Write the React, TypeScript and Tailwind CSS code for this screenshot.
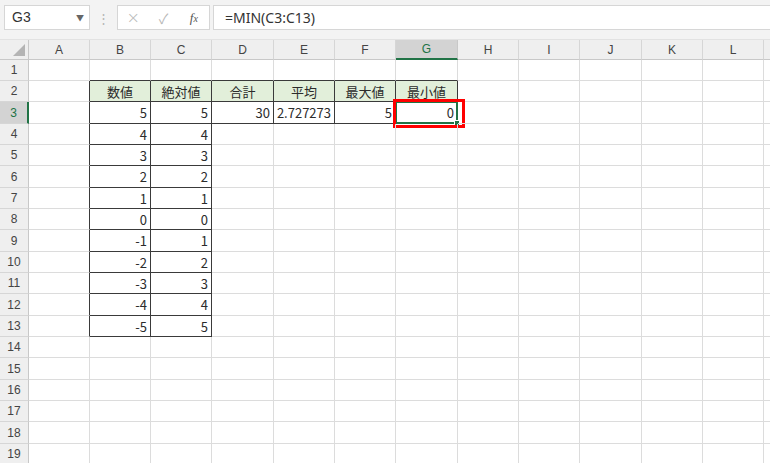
import React from 'react'

const COLS = ['A', 'B', 'C', 'D', 'E', 'F', 'G', 'H', 'I', 'J', 'K', 'L', '']
const COL_W = ['w-[61px]', 'w-[61px]', 'w-[61px]', 'w-[62px]', 'w-[61px]', 'w-[61px]', 'w-[62px]', 'w-[61px]', 'w-[61px]', 'w-[62px]', 'w-[61px]', 'w-[61px]', 'w-[61px]']
const ROW_H = ['h-[21px]', 'h-[21px]', 'h-[22px]']

const nums = [5, 4, 3, 2, 1, 0, -1, -2, -3, -4, -5]

// cell contents: key "row,col" (row 1-based, col 0 = A)
const cells: Record<string, { text: string; head?: boolean }> = {
  '2,1': { text: '数値', head: true },
  '2,2': { text: '絶対値', head: true },
  '2,3': { text: '合計', head: true },
  '2,4': { text: '平均', head: true },
  '2,5': { text: '最大値', head: true },
  '2,6': { text: '最小値', head: true },
  '3,3': { text: '30' },
  '3,4': { text: '2.727273' },
  '3,5': { text: '5' },
  '3,6': { text: '0' },
}
nums.forEach((n, i) => {
  cells[`${i + 3},1`] = { text: String(n) }
  cells[`${i + 3},2`] = { text: String(Math.abs(n)) }
})

function inTable(r: number, c: number) {
  if (c >= 1 && c <= 2 && r >= 2 && r <= 13) return true
  if (c >= 3 && c <= 6 && r >= 2 && r <= 3) return true
  return false
}

function Cell({ r, c }: { r: number; c: number }) {
  const right = inTable(r, c) || inTable(r, c + 1)
  const bottom = inTable(r, c) || inTable(r + 1, c)
  const data = cells[`${r},${c}`]
  const selected = r === 3 && c === 6
  return (
    <div
      className={`relative shrink-0 h-full border-r border-b flex items-center ${COL_W[c]} ${
        right ? 'border-r-[#3a3a3a]' : 'border-r-[#dcdcdc]'
      } ${bottom ? 'border-b-[#3a3a3a]' : 'border-b-[#dcdcdc]'} ${
        data?.head ? 'bg-[#e2efda] justify-center' : 'justify-end pr-[3px]'
      }`}
    >
      {data && <span className="text-[13px] leading-none text-[#2b2b2b]">{data.text}</span>}
      {selected && (
        <>
          <div className="absolute left-[-1px] top-[-1px] right-[-1px] bottom-[-1px] border-2 border-[#217346]" />
          <div className="absolute right-[-3px] bottom-[-3px] w-[6px] h-[6px] bg-[#217346] border border-white" />
          <div className="absolute left-[-3px] top-[-3px] w-[72px] h-[29px] border-[3px] border-[#ff0000]" />
        </>
      )}
    </div>
  )
}

export default function App() {
  const rows = Array.from({ length: 20 }, (_, i) => i + 1)
  return (
    <div className="w-[770px] h-[463px] overflow-hidden bg-white font-['Noto_Sans_CJK_JP','Noto_Sans',sans-serif] text-[#333]">
      {/* formula bar */}
      <div className="h-[39px] bg-[#f3f3f3] flex items-start pt-[5px] pl-[4px]">
        <div className="w-[86px] h-[25px] bg-white border border-[#d6d6d6] flex items-center justify-between pl-[7px] pr-[5px]">
          <span className="text-[14px] text-[#333] font-['Liberation_Sans',sans-serif]">G3</span>
          <span className="text-[8px] text-[#666]">▼</span>
        </div>
        <div className="w-[27px] h-[25px] flex items-center justify-center text-[#b5b5b5] text-[13px]">⋮</div>
        <div className="w-[93px] h-[25px] bg-white border border-[#d6d6d6] flex items-center text-[#b8b8b8]">
          <span className="w-[31px] text-center text-[16px] leading-none font-['DejaVu_Sans',sans-serif] font-light">×</span>
          <span className="w-[31px] text-center text-[14px] leading-none">✓</span>
          <span className="w-[31px] text-center text-[13px] leading-none text-[#555] italic font-['Liberation_Serif',serif]">
            f<span className="text-[10px]">x</span>
          </span>
        </div>
        <div className="ml-[3px] flex-1 h-[25px] bg-white border border-[#d6d6d6] border-r-0 flex items-center pl-[11px]">
          <span className="text-[14px] text-[#333] font-['Noto_Sans',sans-serif]">=MIN(C3:C13)</span>
        </div>
      </div>

      {/* column headers */}
      <div className="flex h-[21px] bg-[#efefef] border-t border-[#e2e2e2]">
        <div className="relative w-[29px] shrink-0 h-full border-r border-b border-[#c8c8c8]">
          <div className="absolute right-[3px] bottom-[3px] w-0 h-0 border-l-[12px] border-l-transparent border-b-[12px] border-b-[#b4b4b4]" />
        </div>
        {COLS.map((c, i) => (
          <div
            key={i}
            className={`${COL_W[i]} shrink-0 h-full flex items-center justify-center text-[12px] border-r ${
              i === 6
                ? 'bg-[#d3d3d3] text-[#217346] border-b-2 border-b-[#217346] border-r-[#c8c8c8]'
                : 'text-[#444] border-b border-b-[#c8c8c8] border-r-[#d6d6d6]'
            } font-['Liberation_Sans',sans-serif]`}
          >
            {c}
          </div>
        ))}
      </div>

      {/* rows */}
      {rows.map((r) => (
        <div key={r} className={`flex ${ROW_H[(r - 1) % 3]}`}>
          <div
            className={`w-[29px] shrink-0 h-full flex items-center justify-center text-[12px] border-b border-b-[#d6d6d6] font-['Liberation_Sans',sans-serif] ${
              r === 3
                ? 'bg-[#d3d3d3] text-[#217346] border-r-2 border-r-[#217346]'
                : 'bg-[#efefef] text-[#444] border-r border-r-[#c8c8c8]'
            }`}
          >
            {r < 20 ? r : ''}
          </div>
          {COLS.map((_, c) => (
            <Cell key={c} r={r} c={c} />
          ))}
        </div>
      ))}
    </div>
  )
}
